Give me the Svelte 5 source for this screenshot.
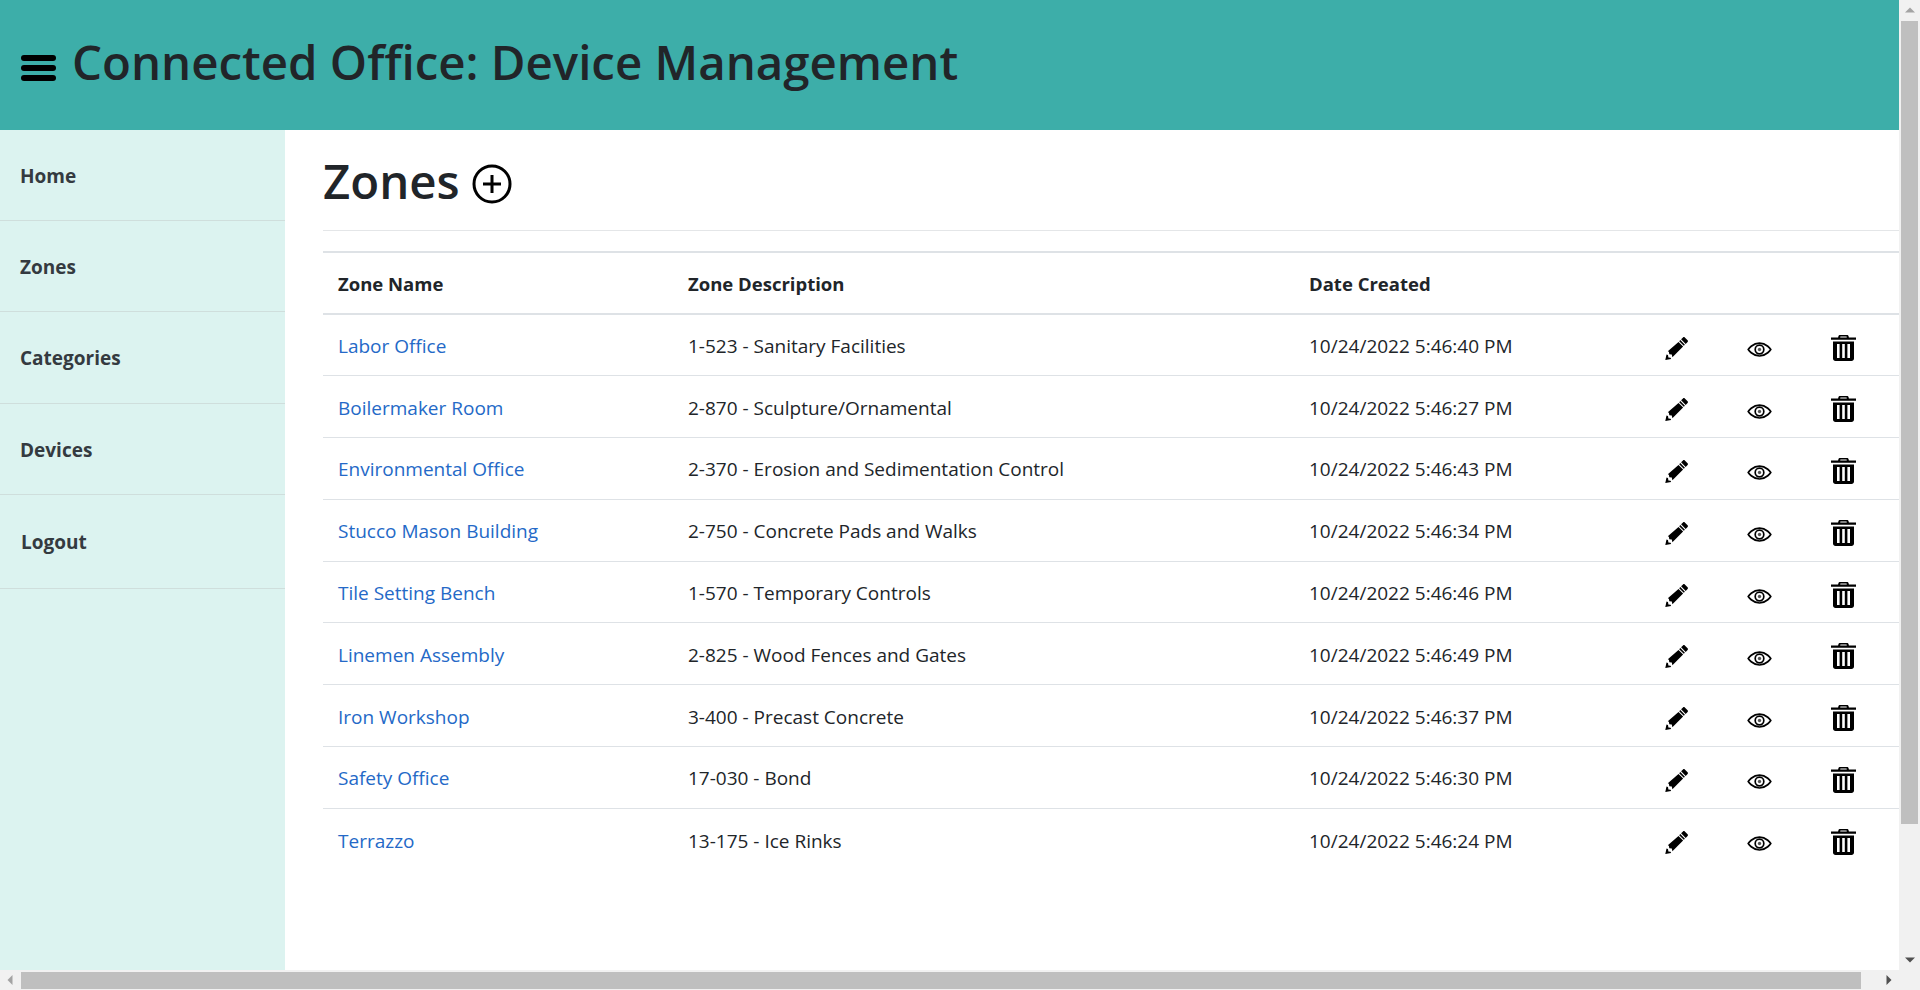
<script>
  const nav = ['Home', 'Zones', 'Categories', 'Devices', 'Logout'];
  const rows = [
    ['Labor Office', '1-523 - Sanitary Facilities', '10/24/2022 5:46:40 PM'],
    ['Boilermaker Room', '2-870 - Sculpture/Ornamental', '10/24/2022 5:46:27 PM'],
    ['Environmental Office', '2-370 - Erosion and Sedimentation Control', '10/24/2022 5:46:43 PM'],
    ['Stucco Mason Building', '2-750 - Concrete Pads and Walks', '10/24/2022 5:46:34 PM'],
    ['Tile Setting Bench', '1-570 - Temporary Controls', '10/24/2022 5:46:46 PM'],
    ['Linemen Assembly', '2-825 - Wood Fences and Gates', '10/24/2022 5:46:49 PM'],
    ['Iron Workshop', '3-400 - Precast Concrete', '10/24/2022 5:46:37 PM'],
    ['Safety Office', '17-030 - Bond', '10/24/2022 5:46:30 PM'],
    ['Terrazzo', '13-175 - Ice Rinks', '10/24/2022 5:46:24 PM']
  ];
</script>

<div class="shell">
  <div class="page">
    <header class="top">
      <svg class="burger" viewBox="0 0 35 26" aria-hidden="true">
        <rect x="0" y="0" width="35" height="6" rx="3" />
        <rect x="0" y="10" width="35" height="6" rx="3" />
        <rect x="0" y="20" width="35" height="6" rx="3" />
      </svg>
      <h1>Connected Office: Device Management</h1>
    </header>
    <div class="body">
      <nav class="side">
        {#each nav as item}
          <a class="nav-item" class:last={item === 'Logout'} href="#x">{item}</a>
        {/each}
      </nav>
      <main class="main">
        <div class="title">
          <h2>Zones</h2>
          <svg class="plus" viewBox="0 0 40 40" aria-hidden="true">
            <circle cx="20" cy="20" r="18" />
            <path d="M20 11v18M11 20h18" />
          </svg>
        </div>
        <table>
          <thead>
            <tr>
              <th class="c1">Zone Name</th>
              <th class="c2">Zone Description</th>
              <th class="c3">Date Created</th>
              <th class="ic"></th><th class="ic"></th><th class="ic end"></th>
            </tr>
          </thead>
          <tbody>
            {#each rows as r}
              <tr>
                <td><a href="#x">{r[0]}</a></td>
                <td>{r[1]}</td>
                <td>{r[2]}</td>
                <td class="icon">
                  <svg viewBox="0 0 23 23" width="23" height="23"><path d="M18 .4c.5-.5 1.300-.5 1.800 0l2.800 2.800c.5.500.5 1.300 0 1.800l-1.900 1.900-4.600-4.600zM15.300 3.100l4.600 4.600-1.100 1.100-4.600-4.600zM13.500 4.900l4.600 4.600-10.700 10.700-.6-2.700-2.500-.3-.4-2.500-1.100-.5zM1.500 17.500l1.500.6.400 2.300 2.200.3.500 1.300-5.800.9z" fill-rule="evenodd"/><path d="M.9 22.300l.6-3 2.300 2.400z" fill="#000"/></svg>
                </td>
                <td class="icon">
                  <svg viewBox="0 0 26 16" width="25" height="15" class="eye"><path d="M1 8s4.500-6.900 12-6.900S25 8 25 8s-4.500 6.900-12 6.900S1 8 1 8z"/><circle cx="13" cy="8" r="4.600"/><circle class="pupil" cx="13" cy="8" r="1.800"/></svg>
                </td>
                <td class="icon">
                  <svg viewBox="0 0 25 26" width="25" height="26"><path fill-rule="evenodd" d="M9 0h7c.8 0 1.400.5 1.600 1.200l.3 1.300H25v2.300H0V2.500h7.100l.3-1.300C7.600.5 8.200 0 9 0zm.4 1.500-.2 1h6.600l-.2-1zM2 6.500h21V23.500c0 1.400-1.100 2.500-2.500 2.500h-16C3.100 26 2 24.900 2 23.500zM6 9v14h2.600V9zm5.200 0v14h2.600V9zm5.200 0v14H19V9z"/></svg>
                </td>
              </tr>
            {/each}
          </tbody>
        </table>
      </main>
    </div>
  </div>
  <div class="vbar">
    <span class="arrow up"></span>
    <div class="vtrack"><div class="vthumb"></div></div>
    <span class="arrow down"></span>
  </div>
  <div class="hbar">
    <span class="arrow left"></span>
    <div class="htrack"><div class="hthumb"></div></div>
    <span class="arrow right"></span>
  </div>
  <div class="corner"></div>
</div>

<style>
  :global(body) {
    margin: 0;
    background: #fff;
  }
  .shell {
    width: 1920px;
    height: 990px;
    display: grid;
    grid-template-columns: 1fr 21px;
    grid-template-rows: 1fr 20px;
    overflow: hidden;
    font-family: "Open Sans", "Noto Sans", sans-serif;
    color: #212529;
  }
  .page {
    display: flex;
    flex-direction: column;
    min-width: 0;
    min-height: 0;
    overflow: hidden;
  }
  .top {
    height: 130px;
    flex: none;
    background: #3daea9;
    display: flex;
    align-items: center;
    padding-left: 21px;
    gap: 16px;
  }
  .burger {
    width: 35px;
    height: 26px;
    fill: #000;
    margin-top: 6px;
  }
  h1 {
    margin: 0 0 5px;
    font-size: 47.400px;
    font-weight: 600;
    line-height: 1.2;
    color: #212529;
  }
  .body {
    flex: 1;
    display: flex;
    min-height: 0;
  }
  .side {
    width: 285px;
    flex: none;
    background: #dcf3f0;
  }
  .nav-item {
    display: block;
    height: 91.200px;
    line-height: 93px;
    box-sizing: border-box;
    padding-left: 20px;
    border-bottom: 1px solid #cfdedc;
    font-size: 19px;
    font-weight: 700;
    color: #343a40;
    text-decoration: none;
  }
  .nav-item.last {
    height: 94px;
    line-height: 94px;
    padding-left: 21px;
  }
  .main {
    flex: 1;
    padding-left: 38px;
    min-width: 0;
  }
  .title {
    height: 100px;
    display: flex;
    align-items: center;
    gap: 12px;
    border-bottom: 1px solid #e4e6e8;
    margin-bottom: 20px;
  }
  h2 {
    margin: 3px 0 0;
    font-size: 47.400px;
    font-weight: 600;
    line-height: 1.2;
    color: #212529;
  }
  .plus {
    width: 40px;
    height: 40px;
    fill: none;
    stroke: #000;
    stroke-width: 3;
    margin-top: 8px;
  }
  table {
    width: 100%;
    border-collapse: collapse;
    table-layout: fixed;
    font-size: 19px;
    border-top: 2px solid #dee2e6;
  }
  th {
    text-align: left;
    font-weight: 700;
    font-size: 18.500px;
    height: 62px;
    padding: 0 15px;
    box-sizing: border-box;
    border-bottom: 2px solid #dee2e6;
    color: #212529;
  }
  td {
    height: 61.800px;
    padding: 2px 15px 0;
    box-sizing: border-box;
    border-bottom: 1px solid #dee2e6;
    color: #212529;
  }
  tbody tr:last-child td {
    border-bottom: 0;
  }
  .c1 { width: 350px; }
  .c2 { width: 621px; }
  .c3 { width: 341px; }
  .ic { width: 83px; padding: 0; }
  .ic.end { width: 98px; }
  td a {
    color: #2469c7;
    text-decoration: none;
  }
  .icon {
    text-align: center;
    padding: 0;
  }
  .icon:last-child {
    padding-right: 13px;
  }
  .icon svg {
    display: inline-block;
    vertical-align: middle;
    fill: #000;
    margin-top: 5px;
  }
  .icon svg.eye {
    fill: none;
    stroke: #000;
    stroke-width: 1.800;
  }
  .icon svg.eye .pupil {
    fill: #555;
    stroke: none;
  }
  .vbar, .hbar {
    background: #f1f1f1;
    display: flex;
    align-items: center;
  }
  .vbar { flex-direction: column; }
  .vtrack, .htrack {
    flex: 1;
    display: flex;
  }
  .vtrack { width: 100%; flex-direction: column; }
  .htrack { height: 100%; }
  .vthumb { width: 17px; height: 803px; margin: 1px 0 0 2px; background: #bfbfbf; }
  .hthumb { height: 17px; width: 1840px; margin: 2px 0 0 1px; background: #bfbfbf; }
  .corner { background: #f1f1f1; }
  .arrow {
    flex: none;
    width: 20px;
    height: 20px;
    box-sizing: border-box;
    display: block;
    position: relative;
  }
  .arrow::after {
    content: "";
    position: absolute;
    left: 50%;
    top: 50%;
    transform: translate(-50%, -50%);
    border: 5px solid transparent;
  }
  .arrow.up::after { border-bottom-color: #a3a3a3; border-top-width: 0; }
  .arrow.down::after { border-top-color: #505050; border-bottom-width: 0; }
  .arrow.left::after { border-right-color: #a3a3a3; border-left-width: 0; }
  .arrow.right::after { border-left-color: #505050; border-right-width: 0; }
</style>
